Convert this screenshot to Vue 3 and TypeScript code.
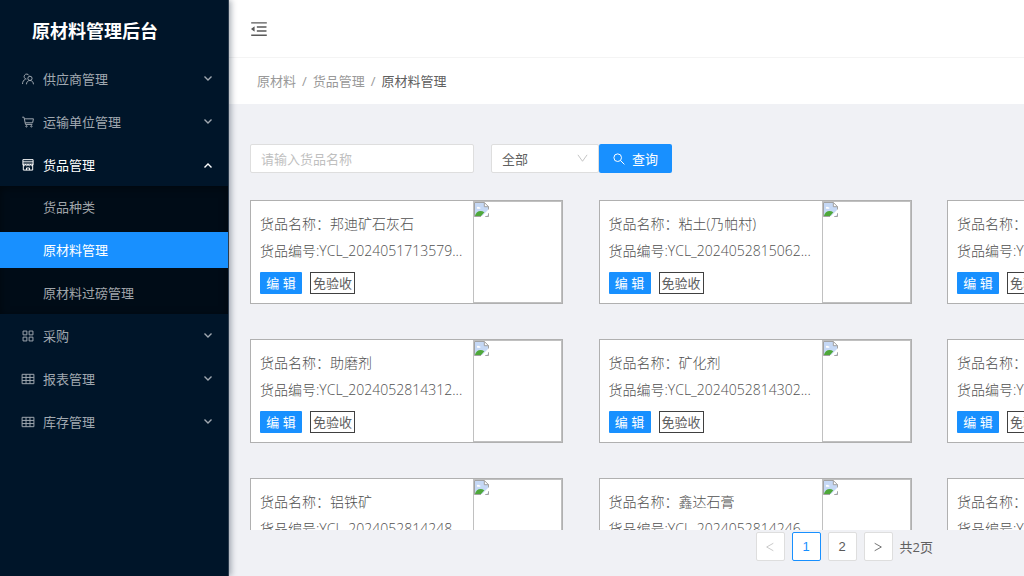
<script setup lang="ts">
import { ref } from 'vue'

interface MenuGroup {
  title: string
  icon: string
  children?: string[]
}

interface Goods {
  name: string
  code: string
}

const menu: MenuGroup[] = [
  { title: '供应商管理', icon: 'team' },
  { title: '运输单位管理', icon: 'cart' },
  { title: '货品管理', icon: 'shop', children: ['货品种类', '原材料管理', '原材料过磅管理'] },
  { title: '采购', icon: 'grid' },
  { title: '报表管理', icon: 'table' },
  { title: '库存管理', icon: 'table' },
]

const iconPaths: Record<string, string> = {
  team: 'M400 520a185 185 0 1 1 180-270M110 880c0-180 90-300 220-360M655 620a155 155 0 1 0 0-310a155 155 0 0 0 0 310zM400 900c0-160 105-280 255-280s255 120 255 280',
  cart: 'M90 160h130l110 530h500M250 280h660l-60 290H310M400 880a50 50 0 1 0 0-100a50 50 0 0 0 0 100zM760 880a50 50 0 1 0 0-100a50 50 0 0 0 0 100z',
  shop: 'M140 120h744v330H140zM140 280h744M170 450v434h684V450M140 450c0 150 186 150 186 0c0 150 186 150 186 0c0 150 186 150 186 0c0 150 186 150 186 0M400 884V730h224v154',
  grid: 'M150 150h280v280H150zM594 150h280v280H594zM150 594h280v280H150zM594 594h280v280H594z',
  table: 'M80 170h864v684H80zM80 398h864M80 626h864M368 170v684M656 170v684',
}

const openGroup = ref('货品管理')
const activeItem = ref('原材料管理')
const keyword = ref('')
const category = ref('全部')
const page = ref(1)

const goods: Goods[] = [
  { name: '邦迪矿石灰石', code: 'YCL_2024051713579...' },
  { name: '粘土(乃帕村)', code: 'YCL_2024052815062...' },
  { name: '石灰石', code: 'YCL_2024052814335...' },
  { name: '助磨剂', code: 'YCL_2024052814312...' },
  { name: '矿化剂', code: 'YCL_2024052814302...' },
  { name: '石膏', code: 'YCL_2024052814291...' },
  { name: '铝铁矿', code: 'YCL_2024052814248...' },
  { name: '鑫达石膏', code: 'YCL_2024052814246...' },
  { name: '粉煤灰', code: 'YCL_2024052814240...' },
]

function toggle(title: string) {
  openGroup.value = openGroup.value === title ? '' : title
}
</script>

<template>
  <div class="layout">
    <aside class="sider">
      <h1 class="brand">原材料管理后台</h1>
      <nav class="menu">
        <template v-for="group in menu" :key="group.title">
          <button
            type="button"
            class="group"
            :class="{ open: openGroup === group.title }"
            :aria-expanded="openGroup === group.title"
            @click="toggle(group.title)"
          >
            <svg class="icon" viewBox="0 0 1024 1024" aria-hidden="true"><path :d="iconPaths[group.icon]" /></svg>
            <span>{{ group.title }}</span>
            <svg class="arrow" viewBox="0 0 10 10" aria-hidden="true"><path d="M1.500 2.500L5 6L8.500 2.500" /></svg>
          </button>
          <div v-if="group.children && openGroup === group.title" class="submenu">
            <a
              v-for="item in group.children"
              :key="item"
              href="#"
              :class="{ active: activeItem === item }"
              @click.prevent="activeItem = item"
            >{{ item }}</a>
          </div>
        </template>
      </nav>
    </aside>

    <div class="main">
      <header class="topbar">
        <button type="button" class="fold" aria-label="收起菜单">
          <svg viewBox="0 0 1024 1024" aria-hidden="true">
            <path d="M408 442h480c4.400 0 8-3.600 8-8v-56c0-4.400-3.600-8-8-8H408c-4.400 0-8 3.600-8 8v56c0 4.400 3.600 8 8 8zm-8 204c0 4.400 3.600 8 8 8h480c4.400 0 8-3.600 8-8v-56c0-4.400-3.600-8-8-8H408c-4.400 0-8 3.600-8 8v56zm504-486H120c-4.400 0-8 3.600-8 8v56c0 4.400 3.600 8 8 8h784c4.400 0 8-3.600 8-8v-56c0-4.400-3.600-8-8-8zm0 632H120c-4.400 0-8 3.600-8 8v56c0 4.400 3.600 8 8 8h784c4.400 0 8-3.600 8-8v-56c0-4.400-3.600-8-8-8zM115.400 518.900L271.700 642c5.800 4.600 14.400.5 14.400-6.900V388.900c0-7.400-8.500-11.500-14.400-6.900L115.400 505.100a8.740 8.740 0 0 0 0 13.800z" />
          </svg>
        </button>
      </header>

      <nav class="breadcrumb" aria-label="面包屑">
        <a href="#">原材料</a><i>/</i><a href="#">货品管理</a><i>/</i><span>原材料管理</span>
      </nav>

      <main class="content">
        <form class="filters" @submit.prevent>
          <input v-model="keyword" type="text" placeholder="请输入货品名称" aria-label="货品名称" />
          <div class="select">
            <select v-model="category" aria-label="货品种类">
              <option>全部</option>
            </select>
            <svg viewBox="0 0 12 12" aria-hidden="true"><path d="M1 2L6 9L11 2" /></svg>
          </div>
          <button type="submit">
            <svg viewBox="0 0 12 12" aria-hidden="true"><path d="M8.500 4.700a3.800 3.800 0 1 1-7.600 0a3.800 3.800 0 0 1 7.600 0zM7.500 7.500L11.400 11.400" /></svg>
            <span>查询</span>
          </button>
        </form>

        <div class="list">
          <article v-for="item in goods" :key="item.code" class="card">
            <div class="info">
              <p>货品名称：{{ item.name }}</p>
              <p>货品编号:{{ item.code }}</p>
              <div class="actions">
                <button type="button">编 辑</button>
                <span class="tag">免验收</span>
              </div>
            </div>
            <div class="photo">
              <svg viewBox="0 0 16 16" role="img" aria-label="货品图片">
                <path d="M1 1h10l4 4v10H1z" fill="#c5d8f5" />
                <path d="M3 6.500c0-1.500 2-2 2.500-.8c1.500-.5 2 1.300.8 1.600H3.500z" fill="#fff" />
                <path d="M1 15c1-5 6-7 10-4l-3.500 4z" fill="#4fa83a" />
                <path d="M11 .5V5h4.500z" fill="#fff" />
                <path d="M16 7.500L7.500 16H12l4-3.500z" fill="#fff" />
                <path d="M7.500 15.500H.5V.5H11L15.500 5v3M11 .5V5h4.500M12 15.500h3.500V12" fill="none" stroke="#9a9a9a" />
              </svg>
            </div>
          </article>
        </div>

        <nav class="pager" aria-label="分页">
          <button type="button" disabled aria-label="上一页">
            <svg viewBox="0 0 12 12" aria-hidden="true"><path d="M10 1.500L2 6L10 10.500" /></svg>
          </button>
          <button
            v-for="n in 2"
            :key="n"
            type="button"
            :class="{ current: page === n }"
            @click="page = n"
          >{{ n }}</button>
          <button type="button" aria-label="下一页" @click="page = 2">
            <svg viewBox="0 0 12 12" aria-hidden="true"><path d="M2 1.500L10 6L2 10.500" /></svg>
          </button>
          <span>共2页</span>
        </nav>
      </main>
    </div>
  </div>
</template>

<style>
body {
  margin: 0;
  overflow: hidden;
}
</style>

<style scoped>
.layout {
  display: flex;
  height: 100vh;
  overflow: hidden;
  background: #f0f1f5;
  color: #606060;
  font: 13px/20px "Open Sans", "Noto Sans CJK SC", sans-serif;
}
.layout * {
  box-sizing: border-box;
}
button,
input,
select {
  font: inherit;
}
button {
  cursor: pointer;
}

.sider {
  z-index: 1;
  flex: 0 0 229px;
  background: #001529;
  border-right: 1px solid #2c3c4e;
  box-shadow: 2px 0 6px rgba(0, 21, 41, 0.35);
}
.brand {
  margin: 0;
  padding: 17px 0 12px 32px;
  color: #fff;
  font-size: 18px;
  font-weight: 700;
  line-height: 28px;
}
.menu {
  display: flex;
  flex-direction: column;
}
.group {
  display: flex;
  align-items: center;
  gap: 8px;
  height: 36px;
  margin: 4px 0 3px;
  padding: 0 15px 0 21px;
  border: 0;
  background: none;
  color: #a0a8b0;
  text-align: left;
}
.group.open {
  color: #fff;
}
.icon {
  width: 14px;
  height: 14px;
  fill: none;
  stroke: currentColor;
  stroke-width: 72;
}
.arrow {
  width: 10px;
  height: 10px;
  margin-left: auto;
  fill: none;
  stroke: currentColor;
  stroke-width: 1.400;
}
.group.open .arrow {
  transform: rotate(180deg);
}
.submenu {
  display: flex;
  flex-direction: column;
  gap: 7px;
  padding: 3px 0;
  background: #000c17;
  box-shadow: inset 0 2px 8px rgba(0, 0, 0, 0.45);
}
.submenu a {
  padding-left: 43px;
  color: #a0a5aa;
  line-height: 36px;
  text-decoration: none;
}
.submenu a.active {
  background: #1890ff;
  color: #fff;
}

.main {
  display: flex;
  flex: 1;
  flex-direction: column;
  min-width: 0;
}
.topbar {
  display: flex;
  align-items: center;
  height: 58px;
  padding-left: 20px;
  border-bottom: 1px solid #f4f4f4;
  background: #fff;
}
.fold {
  display: flex;
  padding: 0;
  border: 0;
  background: none;
}
.fold svg {
  width: 20px;
  height: 20px;
  fill: #595959;
}
.breadcrumb {
  padding: 13px 28px;
  background: #fff;
}
.breadcrumb a,
.breadcrumb i {
  color: #999;
  font-style: normal;
  text-decoration: none;
}
.breadcrumb i {
  margin: 0 6px;
}

.content {
  flex: 1;
  min-height: 0;
  padding: 40px 0 0 21px;
}
.filters {
  display: flex;
  margin-bottom: 27px;
}
.filters input,
.select select {
  height: 29px;
  border: 1px solid #dedede;
  border-radius: 2px;
  background: #fff;
  color: #606060;
}
.filters input {
  width: 224px;
  margin-right: 17px;
  padding: 0 10px;
}
.filters input::placeholder {
  color: #bfbfbf;
}
.select {
  position: relative;
  width: 108px;
}
.select select {
  width: 100%;
  padding: 0 10px;
  appearance: none;
}
.select svg {
  position: absolute;
  top: 9px;
  right: 11px;
  width: 11px;
  height: 11px;
  fill: none;
  stroke: #bfbfbf;
  pointer-events: none;
}
.filters button {
  display: flex;
  align-items: center;
  gap: 7px;
  height: 29px;
  padding: 0 14px;
  border: 0;
  border-radius: 2px;
  background: #1890ff;
  color: #fff;
}
.filters button svg {
  width: 12px;
  height: 12px;
  fill: none;
  stroke: currentColor;
}

.list {
  display: grid;
  grid-template-columns: repeat(3, 313px);
  justify-content: space-between;
  align-content: start;
  row-gap: 35px;
  width: 1010px;
  height: 330px;
  overflow: hidden;
}
.card {
  display: flex;
  height: 104px;
  border: 1px solid #b0b0b0;
  background: #fff;
}
.info {
  flex: 1;
  min-width: 0;
  padding: 9px 0 0 9px;
}
.info p {
  margin: 0;
  overflow: hidden;
  color: #505050;
  font-size: 14px;
  font-weight: 300;
  line-height: 27px;
  white-space: nowrap;
}
.actions {
  display: flex;
  gap: 8px;
  margin-top: 8px;
}
.actions button {
  width: 42px;
  height: 22px;
  padding: 0;
  border: 0;
  border-radius: 1px;
  background: #1890ff;
  color: #fff;
}
.tag {
  width: 45px;
  height: 22px;
  border: 1px solid #404040;
  text-align: center;
}
.photo {
  width: 89px;
  border: 1px solid #c0c0c0;
}
.photo svg {
  display: block;
  width: 15px;
  height: 15px;
}

.pager {
  display: flex;
  align-items: center;
  justify-content: flex-end;
  gap: 7px;
  margin-top: 2px;
  padding-right: 91px;
}
.pager button {
  display: flex;
  align-items: center;
  justify-content: center;
  width: 29px;
  height: 29px;
  padding: 0;
  border: 1px solid #dedede;
  border-radius: 2px;
  background: #fff;
  color: #595959;
  font-family: "Liberation Sans", sans-serif;
}
.pager button.current {
  border-color: #1890ff;
  color: #1890ff;
}
.pager button:disabled {
  color: #bfbfbf;
}
.pager svg {
  width: 10px;
  height: 10px;
  fill: none;
  stroke: currentColor;
}
</style>
